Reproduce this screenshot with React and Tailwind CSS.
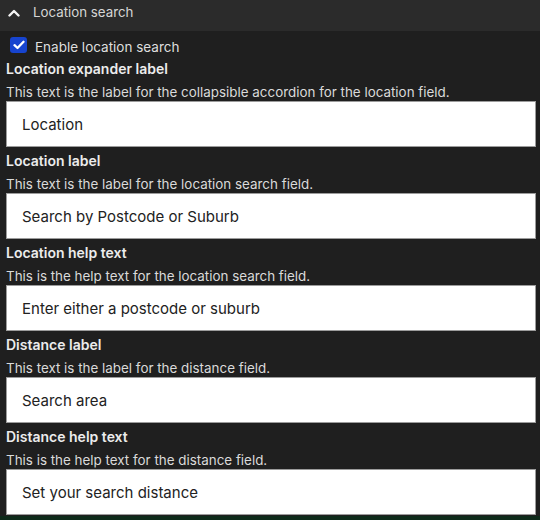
import { useState } from "react"

const fields = [
  {
    label: "Location expander label",
    help: "This text is the label for the collapsible accordion for the location field.",
    value: "Location",
  },
  {
    label: "Location label",
    help: "This text is the label for the location search field.",
    value: "Search by Postcode or Suburb",
  },
  {
    label: "Location help text",
    help: "This is the help text for the location search field.",
    value: "Enter either a postcode or suburb",
  },
  {
    label: "Distance label",
    help: "This text is the label for the distance field.",
    value: "Search area",
  },
  {
    label: "Distance help text",
    help: "This is the help text for the distance field.",
    value: "Set your search distance",
  },
]

export default function App() {
  const [enabled, setEnabled] = useState(true)

  return (
    <div
      className="w-[540px] h-[520px] overflow-hidden flex flex-col bg-[#1f1f1f] text-[#e6e6e6]"
      style={{ fontFamily: "Inter, 'Noto Sans', sans-serif" }}
    >
      {/* Accordion header */}
      <div className="h-[31px] shrink-0 flex items-center gap-[13px] pl-[8px] pb-[5px] bg-[#2b2b2b]">
        <svg width="12" height="8" viewBox="0 0 12 8" fill="none">
          <path d="M1.5 6.5L6 2L10.5 6.5" stroke="#f4f4f4" strokeWidth="2.4" strokeLinecap="round" strokeLinejoin="round" />
        </svg>
        <span className="text-[13.3px] text-[#d6d6d6]">Location search</span>
      </div>

      {/* Body */}
      <div className="px-[6px] pb-[1px]">
        <label className="mt-[6px] h-[21px] flex items-center gap-[8px] pl-[4px] cursor-pointer">
          <button
            type="button"
            onClick={() => setEnabled(!enabled)}
            className={`mb-[6px] w-[17px] h-[16px] rounded-[3px] flex items-center justify-center ${enabled ? "bg-[#1744cf]" : "bg-white border border-[#888]"}`}
            aria-pressed={enabled}
          >
            {enabled && (
              <svg width="12" height="10" viewBox="0 0 12 10" fill="none">
                <path d="M1.5 5.2L4.5 8L10.5 1.8" stroke="white" strokeWidth="2.3" strokeLinecap="round" strokeLinejoin="round" />
              </svg>
            )}
          </button>
          <span className="text-[13.5px] text-[#dedede]">Enable location search</span>
        </label>

        <div className="mt-[1px] flex flex-col">
          {fields.map((f, i) => (
            <Field key={f.label} {...f} first={i === 0} />
          ))}
        </div>
      </div>

      <div className="flex-1 bg-[#0e2a1a]" />
    </div>
  )
}

/** Labelled text field with help text */
function Field({ label, help, value, first }) {
  return (
    <div className={first ? "" : "mt-[4px]"}>
      <div className="text-[14px] leading-[20px] font-semibold text-[#ececec]">{label}</div>
      <div className="mt-[4px] text-[13.4px] leading-[18px] text-[#dadada]">{help}</div>
      <input
        defaultValue={value}
        className="block w-[530px] h-[46px] px-[15px] bg-white border border-[#9c9c9c] text-[15px] text-[#222] outline-none"
      />
    </div>
  )
}
